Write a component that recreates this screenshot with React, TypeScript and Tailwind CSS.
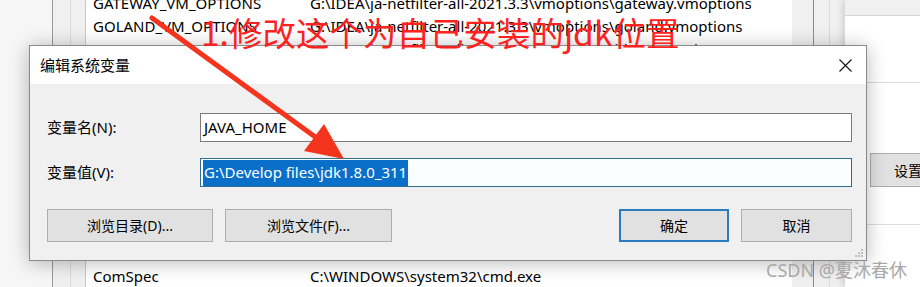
import React from "react";

const ui = { fontFamily: '"Segoe UI","Noto Sans","Noto Sans CJK SC",sans-serif' };

function Row({ name, value }: { name: string; value: string }) {
  return (
    <div className="flex h-[23px] items-center whitespace-nowrap text-[15px] text-black">
      <div className="w-[224px] shrink-0 pl-[7px]">{name}</div>
      <div>{value}</div>
    </div>
  );
}

function Btn({ label, w, primary }: { label: string; w: string; primary?: boolean }) {
  return (
    <div
      className={`${w} flex h-[33px] items-center justify-center bg-[#e1e1e1] text-[14px] text-black ${
        primary ? "border-2 border-[#2b7bc0]" : "border border-[#adadad]"
      }`}
    >
      {label}
    </div>
  );
}

export default function App() {
  return (
    <div className="relative h-[287px] w-[920px] overflow-hidden bg-white" style={ui}>
      {/* background window */}
      <div className="flex h-full w-full">
        <div className="w-[52px] shrink-0 bg-[#f6f6f6]" />
        <div className="flex w-[33px] shrink-0 border-l border-[#9a9a9a] bg-[#f0f0f0]">
          <div className="w-[18px] border-r border-[#dcdcdc]" />
        </div>
        <div className="flex w-[707px] shrink-0 flex-col overflow-hidden border-l border-[#c8c8c8] bg-white">
          <div className="-mt-[8px] flex flex-col">
            <Row name="GATEWAY_VM_OPTIONS" value="G:\IDEA\ja-netfilter-all-2021.3.3\vmoptions\gateway.vmoptions" />
            <Row name="GOLAND_VM_OPTIONS" value="G:\IDEA\ja-netfilter-all-2021.3.3\vmoptions\goland.vmoptions" />
            <Row name="IDEA_VM_OPTIONS" value="G:\IDEA\ja-netfilter-all-2021.3.3\vmoptions\idea.vmoptions" />
          </div>
          <div className="flex-1" />
          <div className="-mb-[1px]">
            <Row name="ComSpec" value="C:\WINDOWS\system32\cmd.exe" />
          </div>
        </div>
        <div className="w-[21px] shrink-0 bg-[#f0f0f0]" />
        <div className="flex w-[32px] shrink-0 border-l border-[#8c8c8c] bg-[#f0f0f0]">
          <div className="w-[16px] border-r border-[#dadada]" />
        </div>
        <div className="flex min-w-0 flex-1 flex-col overflow-hidden bg-white shadow-[-3px_0_6px_rgba(0,0,0,0.12)]">
          <div className="h-[16px] shrink-0 border-b border-[#d6d6d6] bg-[#f0f0f0]" />
          <div className="h-[67px] shrink-0 border-b border-[#dcdcdc]" />
          <div className="h-[70px] shrink-0" />
          <div className="ml-[25px] flex h-[34px] w-[80px] shrink-0 items-center whitespace-nowrap border border-[#adadad] bg-[#e1e1e1] pl-[23px] text-[14px]">
            设置
          </div>
          <div className="h-[38px] shrink-0 border-b border-[#dcdcdc]" />
        </div>
      </div>

      {/* dialog */}
      <div className="absolute left-[29px] top-[45px] flex h-[216px] w-[838px] flex-col border border-[#8a8a8a] bg-[#f0f0f0] shadow-[0_2px_18px_rgba(0,0,0,0.28)]">
        <div className="flex h-[38px] items-center justify-between bg-white pl-[10px] pr-[14px]">
          <span className="text-[15px] text-black">编辑系统变量</span>
          <svg width="13" height="13" viewBox="0 0 13 13">
            <path d="M0.5 0.5 L12.5 12.5 M12.5 0.5 L0.5 12.5" stroke="#111" strokeWidth="1.1" />
          </svg>
        </div>
        <div className="flex flex-1 flex-col pl-[17px] pr-[14px] pt-[29px]">
          <div className="grid grid-cols-[153px_1fr] gap-y-[16px]">
            <div className="flex items-center text-[15px] text-black">变量名(N):</div>
            <div className="flex h-[29px] items-center border border-[#7a7a7a] bg-white pl-[3px] text-[15px] text-black">
              JAVA_HOME
            </div>
            <div className="flex items-center text-[15px] text-black">变量值(V):</div>
            <div className="flex h-[29px] items-center border border-[#2f6e93] bg-[#fbfeff] pl-[2px]">
              <span className="flex h-[26px] items-center bg-[#0a6fc9] px-[1px] text-[15px] text-white">
                G:\Develop files\jdk1.8.0_311
              </span>
            </div>
          </div>
          <div className="mt-[22px] flex items-center">
            <Btn label="浏览目录(D)..." w="w-[166px]" />
            <div className="ml-[12px]">
              <Btn label="浏览文件(F)..." w="w-[167px]" />
            </div>
            <div className="flex-1" />
            <Btn label="确定" w="w-[110px]" primary />
            <div className="ml-[12px]">
              <Btn label="取消" w="w-[111px]" />
            </div>
          </div>
        </div>
        <div className="absolute bottom-[3px] right-[3px] grid grid-cols-3 gap-[1px]">
          {[0, 1, 2, 3, 4, 5, 6, 7, 8].map((i) => (
            <div
              key={i}
              className={`h-[2px] w-[2px] ${[0, 1, 3].includes(i) ? "bg-transparent" : "bg-[#bdbdbd]"}`}
            />
          ))}
        </div>
      </div>

      {/* annotation */}
      <div
        className="absolute left-[201px] top-[13px] whitespace-nowrap text-[33.5px] leading-[38px] text-[#ff2020]"
        style={{ fontFamily: '"Noto Sans CJK SC","Noto Sans",sans-serif', fontWeight: 400 }}
      >
        1.修改这个为自己安装的jdk位置
      </div>
      <svg className="absolute left-0 top-0" width="920" height="287" viewBox="0 0 920 287">
        <line x1="152" y1="18" x2="318" y2="139" stroke="#f5341e" strokeWidth="5" strokeLinecap="round" />
        <polygon points="344,159 324,124 304,151" fill="#f5341e" />
      </svg>

      {/* watermark */}
      <div
        className="absolute left-[766px] top-[257px] whitespace-nowrap text-[18px] text-[#a8a8a8]"
        style={{ fontFamily: '"Noto Sans","Noto Sans CJK SC",sans-serif' }}
      >
        CSDN @夏沐春休
      </div>
    </div>
  );
}
